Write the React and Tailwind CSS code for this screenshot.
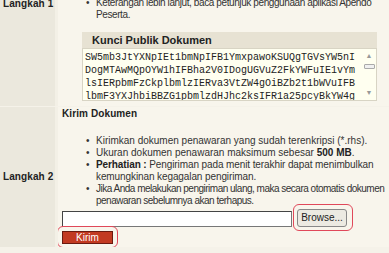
import React from "react";

const keyLines = [
  "SW5mb3JtYXNpIEt1bmNpIFB1YmxpawoKSUQgTGVsYW5nI",
  "DogMTAwMQpOYW1hIFBha2V0IDogUGVuZ2FkYWFuIE1vYm",
  "lsIERpbmFzCkplbmlzIERva3VtZW4gOiBZb2t1bWVuIFB",
  "lbmF3YXJhbiBBZG1pbmlzdHJhc2ksIFR1a25pcyBkYW4g",
];

function Bullet({ children, className = "" }) {
  return (
    <li className="flex">
      <span className="w-[10px] shrink-0 tracking-normal">•</span>
      <span className={"whitespace-nowrap " + className}>{children}</span>
    </li>
  );
}

function Row({ label, children }) {
  return (
    <div className="grid grid-cols-[55px_3px_331px]">
      <div className="bg-[#ebe8dd] flex items-center pl-[3px] font-bold text-[10px] tracking-[0.1px] text-[#222] whitespace-nowrap">
        {label}
      </div>
      <div className="bg-[#f3f0e6]" />
      <div className="overflow-hidden bg-[#f8f5ec]">{children}</div>
    </div>
  );
}

export default function App() {
  return (
    <div
      className="w-[389px] h-[253px] overflow-hidden bg-[#f5f2e9] text-[10px] leading-[12px] text-[#333]"
      style={{ fontFamily: "Tahoma, 'Liberation Sans', Arial, sans-serif" }}
    >
      <div className="-mt-[98px] flex flex-col gap-[1px]">
        <Row label="Langkah 1">
          <div className="h-[204px] flex flex-col justify-end pb-[5px]">
            <ul className="pl-[28px]">
              <Bullet>Unduh kunci publik dokumen di bawah ini.</Bullet>
              <Bullet>Enkripsi dokumen penawaran menggunakan aplikasi Apendo.</Bullet>
              <Bullet className="tracking-[-0.4px]">
                Keterangan lebih lanjut, baca petunjuk penggunaan aplikasi Apendo
                <br />
                Peserta.
              </Bullet>
            </ul>
            <div className="mt-[11px] ml-[24px] mr-[12px]">
              <div className="h-[16px] bg-[#e7e2d3] pl-[10px] font-bold text-[11px] leading-[16px] text-[#222]">
                Kunci Publik Dokumen
              </div>
              <div className="flex h-[53px] bg-[#fffff0] border border-[#d8d4c4]">
                <div
                  className="flex-1 pl-[2px] pt-[2px] text-[10px] leading-[13px] text-[#222] overflow-hidden"
                  style={{ fontFamily: "'Liberation Mono', 'Courier New', monospace" }}
                >
                  {keyLines.map((l) => (
                    <div key={l} className="whitespace-nowrap">{l}</div>
                  ))}
                </div>
                <div className="w-[14px] shrink-0 flex flex-col items-center py-[3px] text-[#999] text-[7px] leading-[8px]">
                  <span>▲</span>
                  <span className="block w-[11px] h-[5px] mt-[4px] border border-[#aaa] rounded-[1px] bg-[#f0f0f0]" />
                  <span className="mt-auto">▼</span>
                </div>
              </div>
            </div>
          </div>
        </Row>
        <Row label="Langkah 2">
          <div className="h-[140px] pl-[4px] pt-[1px]">
            <div className="font-bold text-[10px] tracking-[0.1px] text-[#222]">Kirim Dokumen</div>
            <ul className="pl-[24px] mt-[15px]">
              <Bullet>Kirimkan dokumen penawaran yang sudah terenkripsi (*.rhs).</Bullet>
              <Bullet>
                Ukuran dokumen penawaran maksimum sebesar <b className="text-[#222]">500 MB</b>.
              </Bullet>
              <Bullet className="tracking-[-0.1px]">
                <b className="text-[#222]">Perhatian :</b> Pengiriman pada menit terakhir dapat menimbulkan
                <br />
                kemungkinan kegagalan pengiriman.
              </Bullet>
              <Bullet className="tracking-[-0.5px]">
                Jika Anda melakukan pengiriman ulang, maka secara otomatis dokumen
                <br />
                penawaran sebelumnya akan terhapus.
              </Bullet>
            </ul>
            <div className="mt-[2px] grid grid-cols-[230px_50px] gap-x-[5px] items-end">
              <div className="h-[16px] bg-white border border-[#777] border-t-[#444] border-l-[#444]" />
              <div className="relative">
                <button className="block w-[50px] h-[18px] rounded-[3px] border border-[#888] bg-[#eceae2] text-[10px] text-[#222]">
                  Browse...
                </button>
                <div className="absolute -left-[4px] -top-[5px] w-[60px] h-[27px] rounded-[6px] border border-[#e0485a]" />
              </div>
            </div>
            <div className="relative mt-[4px] w-[51px]">
              <button className="block w-[51px] h-[13px] bg-[#c23a22] border border-[#6a1a10] text-white text-[10px] leading-[11px]">
                Kirim
              </button>
              <div className="absolute -left-[5px] -top-[5px] w-[61px] h-[22px] rounded-[6px] border border-[#e0485a]" />
            </div>
          </div>
        </Row>
      </div>
    </div>
  );
}
